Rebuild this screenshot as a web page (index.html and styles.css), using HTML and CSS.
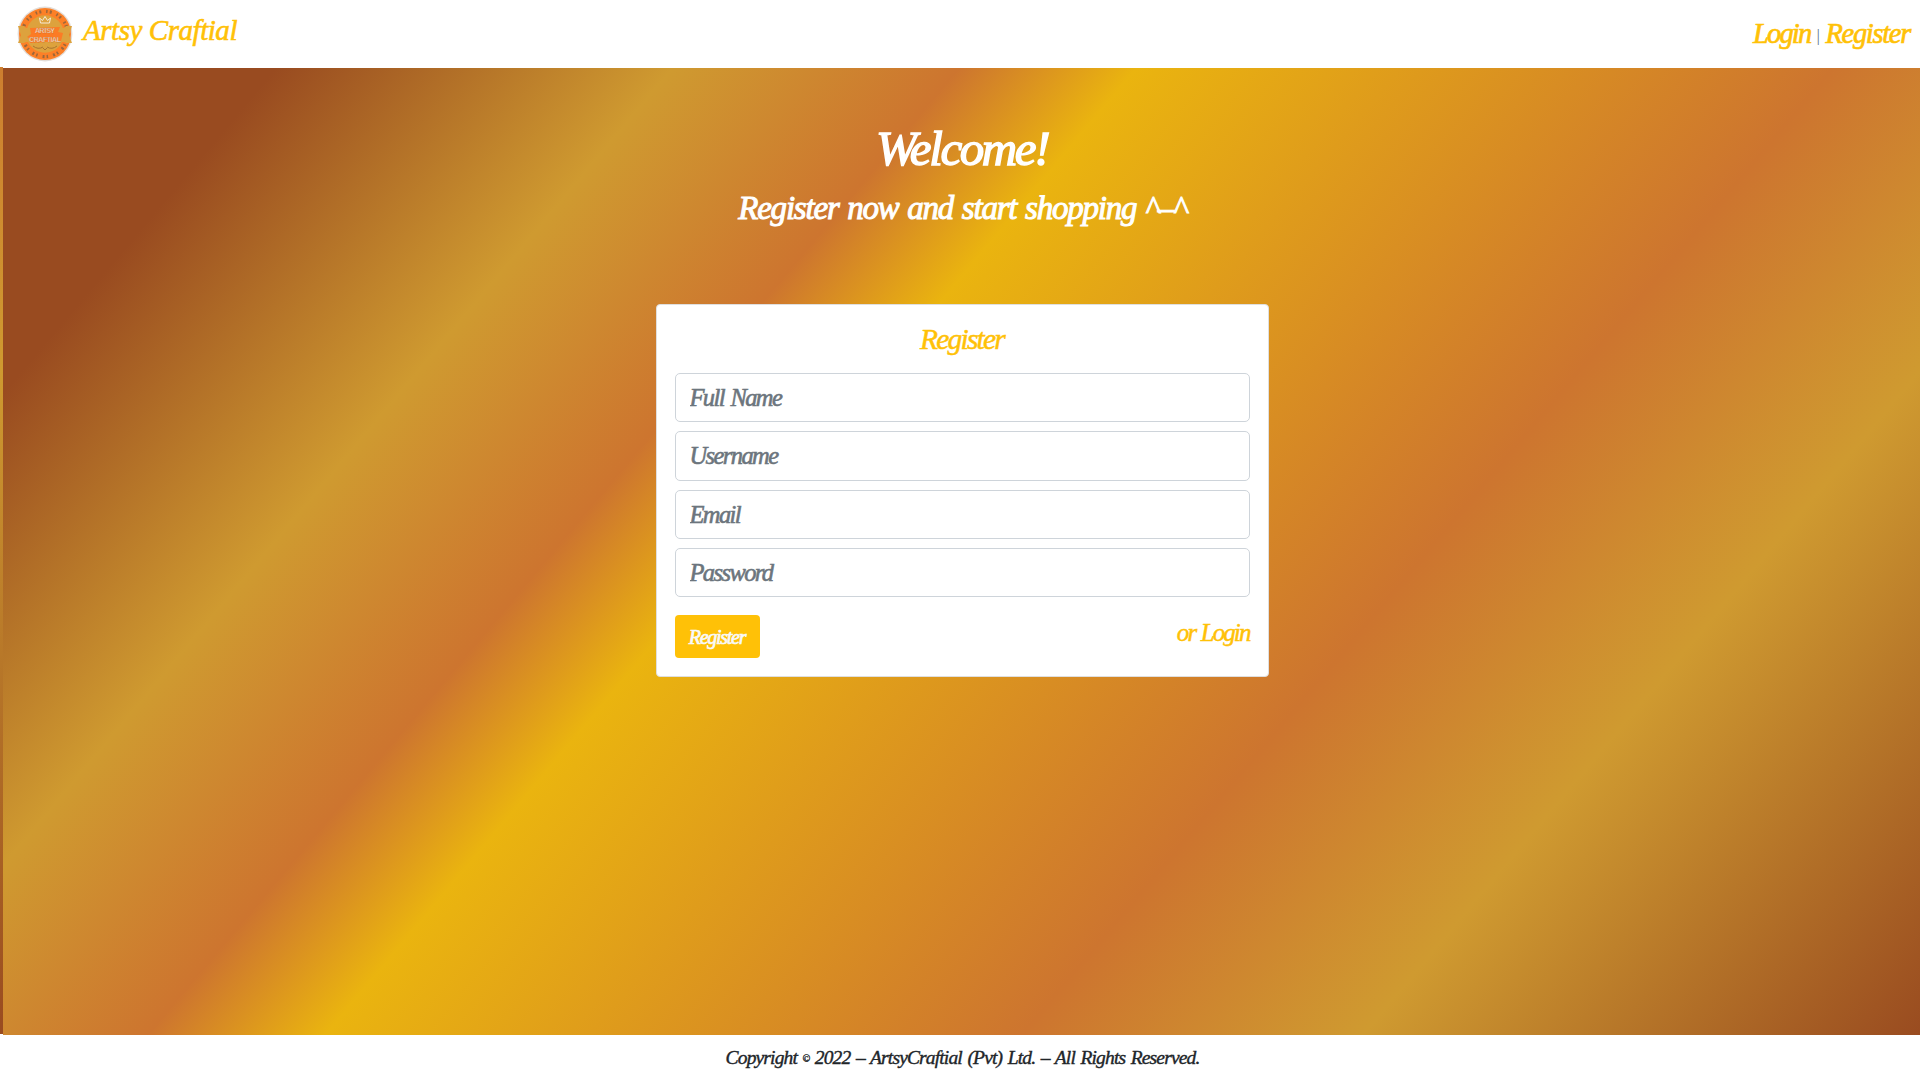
FILE: index.html
```html
<!DOCTYPE html>
<html lang="en">
<head>
<meta charset="utf-8">
<title>Artsy Craftial</title>
<link rel="stylesheet" href="styles.css">
</head>
<body>
<header class="navbar">
  <a class="brand">
    <svg class="logo" viewBox="0 0 56 56" width="56" height="56">
      <circle cx="28" cy="28" r="27.4" fill="#e3ddd8"/>
      <circle cx="28" cy="28" r="26" fill="#fc8027"/>
      <circle cx="28" cy="28" r="22.6" fill="none" stroke="#9c673b" stroke-width="3.2" stroke-dasharray="1.5 2.2 2 5"/>
      <circle cx="28" cy="28" r="18.8" fill="#dda23d"/>
      <path d="M1 20h6l2 2h38l2-2h6l-3 9 3 8h-6l-2-1H9l-2 1H1l3-8z" fill="#dda23d"/>
      <path d="M13 22l30-1-2 5 5 1-2 8-31 2 1-4-4-2 4-3z" fill="#fc7b25"/>
      <path d="M23.5 17l-1-5 3 2.500 2.500-4 2.500 4 3-2.500-1 5z" fill="#dda23d" stroke="#f7ebd8" stroke-width="1"/>
      <text class="logo-text" x="28" y="27" text-anchor="middle" textLength="20">ARTSY</text>
      <text class="logo-text" x="28" y="36" text-anchor="middle" textLength="32">CRAFTIAL</text>
      <path d="M16 40q5 4 10 1M40 40q-5 4-10 1M26 42l2 2 2-2" fill="none" stroke="#a87331" stroke-width="1"/>
    </svg>
    <span class="brand-name">Artsy Craftial</span>
  </a>
  <nav class="links"><a class="login">Login</a><span class="divider">|</span><a class="signup">Register</a></nav>
</header>
<main class="hero">
  <h1 class="title">Welcome!</h1>
  <h2 class="subtitle">Register now and start shopping ^–^</h2>
  <form class="card">
    <h3 class="card-title">Register</h3>
    <input class="field" type="text" placeholder="Full Name">
    <input class="field" type="text" placeholder="Username">
    <input class="field" type="email" placeholder="Email">
    <input class="field" type="password" placeholder="Password">
    <div class="actions">
      <button class="submit" type="button">Register</button>
      <a class="alt">or Login</a>
    </div>
  </form>
</main>
<footer class="footer">Copyright <span class="mark">©</span> 2022 – ArtsyCraftial (Pvt) Ltd. – All Rights Reserved.</footer>
</body>
</html>
```
FILE: styles.css
```css
* { box-sizing: border-box; }
body {
  margin: 0;
  height: 1080px;
  display: flex;
  flex-direction: column;
  background: #fff;
  color: #212529;
  font-family: "Liberation Serif", "Times New Roman", serif;
  font-style: italic;
  overflow: hidden;
}
h1, h2, h3 { margin: 0; font-weight: 400; }

.navbar {
  height: 67px;
  flex: none;
  display: flex;
  justify-content: space-between;
  padding: 0 10px 0 17px;
  color: #ffc107;
}
.brand { display: flex; }
.logo { margin-top: 6px; }
.logo-text {
  font: 700 7px "Liberation Sans", sans-serif;
  fill: #ffe6cc;
  stroke: #b86832;
  stroke-width: .25px;
}
.brand-name {
  margin-left: 10px;
  font-size: 29px;
  line-height: 60px;
  letter-spacing: -.450px;
  -webkit-text-stroke: .6px currentColor;
}
.links {
  display: flex;
  font-size: 28.500px;
  line-height: 68px;
  -webkit-text-stroke: .7px currentColor;
}
.login { letter-spacing: -1.800px; }
.signup { letter-spacing: -1.300px; }
.divider {
  width: 15px;
  text-align: center;
  color: #54708a;
  font-size: 16px;
  line-height: 72px;
  -webkit-text-stroke: 0;
}

.hero {
  --warm: linear-gradient(130deg, #994b20 10%, #cf9a30 24.500%, #cd752f 35%, #eab40f 41.500%, #cd752f 67%, #cf9a30 79.500%, #994b20 100%);
  height: 968px;
  flex: none;
  display: flex;
  flex-direction: column;
  align-items: center;
  padding: 50px 0 0 4px;
  background:
    var(--warm) 3px 1px / 1920px 967px no-repeat,
    var(--warm) -1917px 0 / 1920px 967px no-repeat;
}
.title {
  color: #fff;
  font-size: 49px;
  line-height: 64px;
  letter-spacing: -2.400px;
  -webkit-text-stroke: 1.400px currentColor;
}
.subtitle {
  color: #fff;
  font-size: 33px;
  line-height: 55px;
  letter-spacing: -1.200px;
  word-spacing: 1.600px;
  -webkit-text-stroke: 1px currentColor;
}

.card {
  width: 613px;
  height: 373px;
  margin-top: 68px;
  padding: 17px 18px;
  display: flex;
  flex-direction: column;
  background: #fff;
  border: 1px solid #dfdfdf;
  border-radius: 4px;
}
.card-title {
  height: 51px;
  text-align: center;
  color: #ffc107;
  font-size: 29.500px;
  line-height: 35px;
  letter-spacing: -1.800px;
  -webkit-text-stroke: .5px currentColor;
}
.field {
  height: 49.330px;
  margin: 0 0 9px;
  padding: 1px 14px 0;
  border: 1px solid #ced4da;
  border-radius: 5px;
  background: #fff;
  font: italic 24.500px "Liberation Serif", serif;
  letter-spacing: -1.600px;
  word-spacing: 2px;
  outline: 0;
}
.field::placeholder {
  color: #6c757d;
  opacity: 1;
  -webkit-text-stroke: .6px currentColor;
}
.actions {
  margin-top: 9px;
  display: flex;
  justify-content: space-between;
}
.submit {
  width: 85px;
  height: 43px;
  padding: 2px 0 0;
  border: 0;
  border-radius: 4px;
  background: #ffc107;
  color: #f8f9fa;
  font: italic 20px "Liberation Serif", serif;
  letter-spacing: -1.300px;
  -webkit-text-stroke: .7px currentColor;
}
.alt {
  color: #ffc107;
  font-size: 25px;
  line-height: 35px;
  letter-spacing: -1.900px;
  word-spacing: 1px;
  -webkit-text-stroke: .5px currentColor;
}
.footer {
  height: 45px;
  padding-left: 5px;
  text-align: center;
  font-size: 19.500px;
  line-height: 46px;
  letter-spacing: -.850px;
  word-spacing: 1.500px;
  -webkit-text-stroke: .4px currentColor;
}
.mark {
  font-size: 10px;
  vertical-align: 2px;
  line-height: 1;
}
```
